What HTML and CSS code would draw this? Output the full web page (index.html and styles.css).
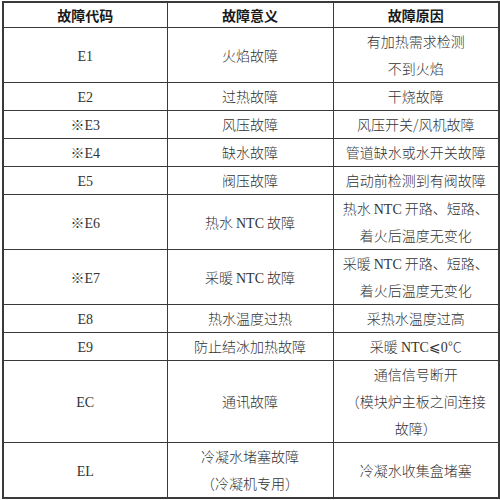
FILE: index.html
```html
<!DOCTYPE html>
<html lang="zh-CN">
<head>
<meta charset="utf-8">
<title>故障代码</title>
<link rel="stylesheet" href="styles.css">
</head>
<body>
<table class="faults">
  <colgroup>
    <col class="c1"><col class="c2"><col class="c3">
  </colgroup>
  <thead>
    <tr class="rh"><th>故障代码</th><th>故障意义</th><th>故障原因</th></tr>
  </thead>
  <tbody>
    <tr class="r2"><td><span class="lat">E1</span></td><td>火焰故障</td><td>有加热需求检测<br>不到火焰</td></tr>
    <tr class="r1"><td><span class="lat">E2</span></td><td>过热故障</td><td>干烧故障</td></tr>
    <tr class="r1"><td>※<span class="lat">E3</span></td><td>风压故障</td><td>风压开关/风机故障</td></tr>
    <tr class="r1"><td>※<span class="lat">E4</span></td><td>缺水故障</td><td>管道缺水或水开关故障</td></tr>
    <tr class="r1"><td><span class="lat">E5</span></td><td>阀压故障</td><td>启动前检测到有阀故障</td></tr>
    <tr class="r2"><td>※<span class="lat">E6</span></td><td>热水 <span class="lat">NTC</span> 故障</td><td>热水 <span class="lat">NTC</span> 开路、短路、<br>着火后温度无变化</td></tr>
    <tr class="r2"><td>※<span class="lat">E7</span></td><td>采暖 <span class="lat">NTC</span> 故障</td><td>采暖 <span class="lat">NTC</span> 开路、短路、<br>着火后温度无变化</td></tr>
    <tr class="r1"><td><span class="lat">E8</span></td><td>热水温度过热</td><td>采热水温度过高</td></tr>
    <tr class="r1"><td><span class="lat">E9</span></td><td>防止结冰加热故障</td><td>采暖 <span class="lat">NTC</span><span class="sym">⩽</span><span class="lat">0</span>℃</td></tr>
    <tr class="r3"><td><span class="lat">EC</span></td><td>通讯故障</td><td>通信信号断开<br>（模块炉主板之间连接<br>故障）</td></tr>
    <tr class="r2"><td><span class="lat">EL</span></td><td>冷凝水堵塞故障<br>（冷凝机专用）</td><td>冷凝水收集盒堵塞</td></tr>
  </tbody>
</table>
</body>
</html>
```

FILE: styles.css
```css
html, body {
  margin: 0;
  padding: 0;
  background: #ffffff;
}

body {
  padding: 1px 0 0 2px;
  font-family: "Noto Sans CJK SC", sans-serif;
  font-size: 14px;
  color: #333333;
}

.faults {
  border-collapse: collapse;
  width: 496px;
  table-layout: fixed;
  border: 2px solid #3a3a3a;
}

.c1 { width: 164px; }
.c2 { width: 166px; }
.c3 { width: 166px; }

.faults th,
.faults td {
  border: 1px solid #3a3a3a;
  padding: 0;
  text-align: center;
  vertical-align: middle;
  line-height: 27px;
  white-space: nowrap;
}

.faults td {
  font-weight: 300;
}

.faults th {
  font-weight: bold;
  color: #1a1a1a;
  line-height: 24px;
}

.lat {
  font-family: "Liberation Serif", serif;
  font-weight: normal;
  line-height: 14px;
}

.sym {
  font-family: "DejaVu Sans", sans-serif;
  font-weight: normal;
  line-height: 14px;
}

.rh { height: 24px; }
.r1 { height: 27px; }
.r2 { height: 54px; }
.r3 { height: 81px; }
```
